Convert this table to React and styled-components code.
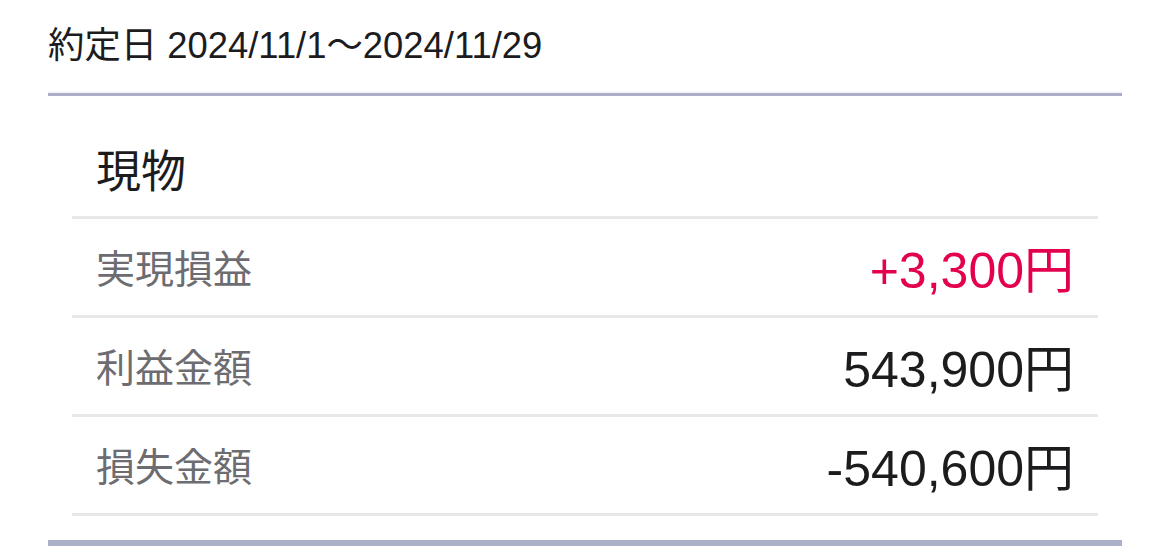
import React from 'react';
import styled, { createGlobalStyle } from 'styled-components';

const GlobalStyle = createGlobalStyle`
  body {
    margin: 0;
    background: #ffffff;
    font-family: "Liberation Sans", "Noto Sans CJK JP", sans-serif;
  }
`;

const Page = styled.div`
  padding: 0 48px;
  width: 1170px;
  box-sizing: border-box;
`;

const Header = styled.div`
  height: 96px;
  display: flex;
  align-items: center;
  padding-bottom: 10px;
  box-sizing: border-box;
  border-bottom: 3px solid #adadc8;
  box-shadow: 0 -3px 0 -1px #f4f4f9 inset;
  font-size: 36.4px;
  color: #1c1c1e;
`;

const Section = styled.section`
  padding: 0 24px 24px;
  border-bottom: 6px solid #a9b0c8;
`;

const SectionTitle = styled.div`
  height: 123px;
  box-sizing: border-box;
  padding: 24px 0 0 24px;
  display: flex;
  align-items: center;
  font-size: 45px;
  color: #1c1c1e;
  border-bottom: 3px solid #e8e8ea;
`;

const Row = styled.div`
  height: 99px;
  box-sizing: border-box;
  padding: 0 24px 3px;
  display: flex;
  align-items: center;
  justify-content: space-between;
  border-bottom: 3px solid #e8e8ea;
`;

const Label = styled.span`
  font-size: 39px;
  color: #6c6c71;
`;

const Value = styled.span`
  font-size: 50px;
  color: ${props => (props.$positive ? '#e3004f' : '#1c1c1e')};
`;

const rows = [
  { label: '実現損益', value: '+3,300円', positive: true },
  { label: '利益金額', value: '543,900円' },
  { label: '損失金額', value: '-540,600円' },
];

export default function App() {
  return (
    <>
      <GlobalStyle />
      <Page>
        <Header>約定日 2024/11/1〜2024/11/29</Header>
        <Section>
          <SectionTitle>現物</SectionTitle>
          {rows.map(row => (
            <Row key={row.label}>
              <Label>{row.label}</Label>
              <Value $positive={row.positive}>{row.value}</Value>
            </Row>
          ))}
        </Section>
      </Page>
    </>
  );
}
